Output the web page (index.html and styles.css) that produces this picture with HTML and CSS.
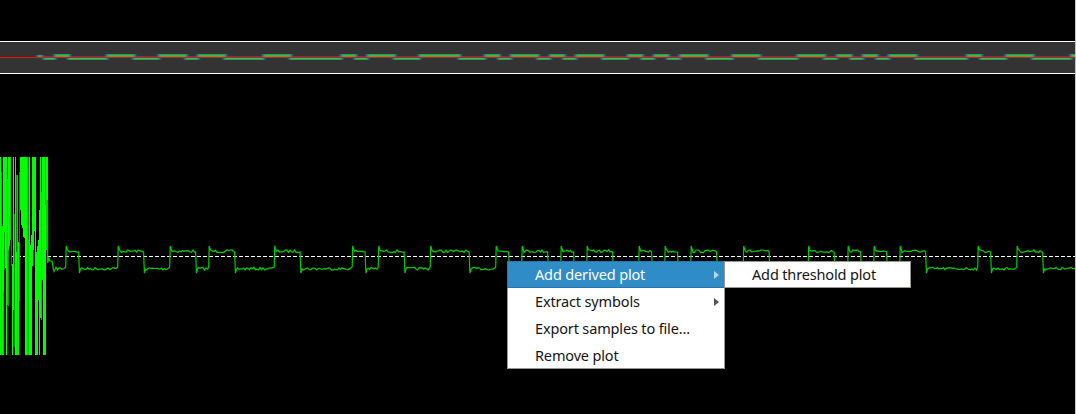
FILE: index.html
```
<!DOCTYPE html>
<html lang="en">
<head>
<meta charset="utf-8">
<title>Signal viewer</title>
<link rel="stylesheet" href="styles.css">
</head>
<body>
<main class="viewer">
  <svg class="plots" width="1075" height="414" viewBox="0 0 1075 414">
    <defs><filter id="soft" x="-5%" y="-200%" width="110%" height="500%"><feGaussianBlur stdDeviation="0.8 0.4"/></filter></defs>
    <rect class="band" x="0" y="42" width="1075" height="31"/>
    <rect class="edge" x="0" y="41" width="1075" height="1"/>
    <rect class="edge" x="0" y="73" width="1075" height="1"/>
    <g filter="url(#soft)">
      <path id="halo" class="halo"/>
      <path id="glow" class="glow"/>
      <path id="core" class="core"/>
    </g>
    <rect class="tuner" x="0" y="57" width="1075" height="1"/>
    <path class="zero" d="M-1 256.5H1075"/>
    <g id="burst"></g>
    <path id="wave" class="wave"/>
  </svg>
  <nav class="menu">
    <div class="item active"><span>Add derived plot</span><svg class="arrow" width="5" height="8" viewBox="0 0 5 8"><path d="M0 0L5 4L0 8Z"/></svg></div>
    <div class="item"><span>Extract symbols</span><svg class="arrow" width="5" height="8" viewBox="0 0 5 8"><path d="M0 0L5 4L0 8Z"/></svg></div>
    <div class="item"><span>Export samples to file...</span></div>
    <div class="item"><span>Remove plot</span></div>
  </nav>
  <nav class="menu submenu"><div class="item"><span>Add threshold plot</span></div></nav>
</main>
<script src="plots.js"></script>
</body>
</html>
```
FILE: styles.css
```
body { margin: 0; background: #000; overflow: hidden; }
.viewer { position: relative; box-sizing: border-box; width: 1076px; height: 414px; background: #000; border-right: 1px solid #c8c5c2; }
.plots { display: block; }
.band { fill: #333; }
.edge { fill: #fff; }
.tuner { fill: #e5140c; }
.zero { stroke: #fff; stroke-width: 1; stroke-dasharray: 4 2; }
.halo, .glow, .core, .wave { fill: none; }
.halo { stroke: #3b4382; stroke-width: 3.6; }
.glow { stroke: #2b9a70; stroke-width: 3.2; }
.core { stroke: #4cb832; stroke-width: 1.6; }
.wave { stroke: #00cc00; stroke-width: 1.2; }
.bright { fill: #00ff00; }
.mid { fill: #00d400; }
.dim { fill: #009400; }
.menu { position: absolute; left: 507px; top: 261px; box-sizing: border-box; width: 218px; height: 108px; background: #fff; border: 1px solid #999693; font: 14.5px/27px "Noto Sans", sans-serif; letter-spacing: -0.15px; color: #141414; }
.submenu { left: 724px; width: 187px; height: 27px; }
.item { display: flex; align-items: center; justify-content: space-between; box-sizing: border-box; height: 27px; padding: 0 5px 0 27px; white-space: pre; }
.menu > .item:first-child { height: 26px; line-height: 26px; }
.submenu > .item:first-child { height: 25px; line-height: 25px; }
.active { margin: -1px -1px 0; border: 1px solid #2676ab; background: #308cc6; color: #fff; }
.menu > .active:first-child { height: 27px; line-height: 25px; }
.arrow { fill: #555; }
.active .arrow { fill: #b5d6ec; }
```
FILE: plots.js
```
// Start and end of every high pulse, in pixels.
const pulses = [[66,79],[118,144],[170,196],[209,235],[274.5,300.5],[352.5,365.5],[378.5,404.5],[430.5,469.5],[496,509],[522,548],[561,574],[587,613],[639,652],[665,678],[691,717],[743.5,769.5],[808.5,834.5],[848,861],[874,887],[900,926],[978,991],[1017,1043],[1082,1108]];

let seed = 7;
const noise = () => { seed = (seed * 16807) % 2147483647; return seed / 2147483647 - 0.5; };
let wave = 'M47.5 200L47.7 263L49 258L50 261L52 261L53.5 270L54 271.5';
const run = (from, to, y) => {
  for (let x = from; x < to - 1; x += 1.5) wave += `L${x.toFixed(1)} ${(y + noise() * 2.8).toFixed(1)}`;
};
let x = 56;
for (const [a, b] of pulses) {
  run(x, a, 268.7);
  if (a > 1074) break;
  wave += `L${a - .3} 267L${a + .2} 246L${a + 1.3} 249.5`;
  run(a + 2, b, 251.2);
  wave += `L${b - .4} 252L${b + .4} 273L${b + 1.5} 269`;
  x = b + 2.5;
}
document.getElementById('wave').setAttribute('d', wave);

const strokes = inset => {
  let d = `M${36 + inset} 56.5H${44 - inset}`;
  let low = 42;
  for (const [a, b] of pulses) {
    d += `M${low + inset} 58.3H${a - 9 - inset}`;
    d += `M${a - 13 + inset} 55.7H${b - 7.5 - inset}`;
    low = b - 12.5;
  }
  return d;
};
document.getElementById('halo').setAttribute('d', strokes(0));
document.getElementById('glow').setAttribute('d', strokes(1.5));
document.getElementById('core').setAttribute('d', strokes(3));

// Clipped burst: x, width, top, bottom, shade.
const bars = [
  [0,1,157,355,'bright'],[1,1,172,355,'mid'],[2,1,226,355,'bright'],[3,1,157,355,'bright'],[3,1,292,355,'mid'],
  [4,1,157,258,'bright'],[5,1,157,268,'bright'],[4,1,232,270,'dim'],[6,1,157,355,'bright'],[7,1,179,305,'mid'],[8,1,180,306,'dim'],
  [8,1,157,250,'bright'],[9,1,157,246,'bright'],[10,1,157,240,'mid'],[11,1,240,266,'dim'],[12,1,264,355,'bright'],
  [13,1,157,310,'bright'],[14,1,214,347,'dim'],[15,1,157,355,'bright'],[16,1,175,252,'dim'],[16,1,252,355,'bright'],
  [17,1,175,355,'mid'],[18,1,242,355,'bright'],[19,1,172,301,'dim'],[20,1,157,210,'bright'],[21,1,157,225,'bright'],
  [22,1,157,228,'bright'],[23,1,157,237,'bright'],[24,1,157,238,'bright'],[25,2,157,355,'bright'],[27,1,157,355,'mid'],[28,1,157,355,'dim'],
  [28,1,240,355,'mid'],[29,1,157,355,'bright'],[30,1,245,355,'bright'],[31,1,235,355,'bright'],[32,1,157,266,'bright'],
  [33,1,157,250,'bright'],[34,1,157,231,'bright'],[35,1,157,355,'bright'],[36,1,252,355,'bright'],[37,1,246,355,'bright'],
  [38,1,240,300,'bright'],[39,1,210,355,'bright'],[40,1,157,318,'bright'],[41,1,192,320,'mid'],[42,1,157,280,'bright'],
  [43,1,157,355,'bright'],[44,1,157,355,'bright'],[45,1,205,355,'bright'],[46,1,157,250,'bright'],[47,1,157,205,'bright'],[46,1,200,249,'mid'],[45,1,157,205,'dim']
];
const burst = document.getElementById('burst');
for (const [left, width, top, bottom, shade] of bars) {
  const r = document.createElementNS('http://www.w3.org/2000/svg', 'rect');
  r.setAttribute('x', left); r.setAttribute('y', top);
  r.setAttribute('width', width); r.setAttribute('height', bottom - top);
  r.setAttribute('class', shade);
  burst.appendChild(r);
}
```
